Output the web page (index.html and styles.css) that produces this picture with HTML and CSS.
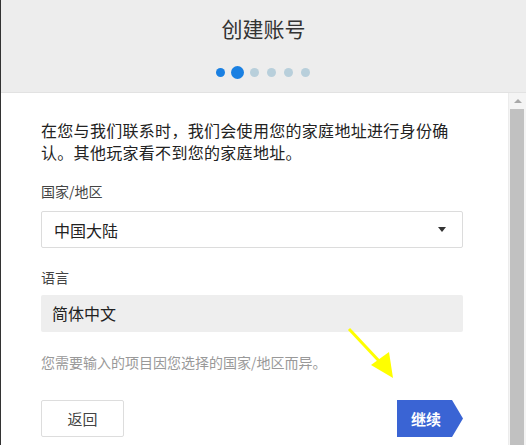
FILE: index.html
```html
<!DOCTYPE html>
<html lang="zh-CN">
<head>
	<meta charset="UTF-8">
	<title>创建账号</title>
	<link rel="stylesheet" href="styles.css">
</head>
<body>
	<div class="window">
		<div class="header">
			<h1 class="title">创建账号</h1>
			<ul class="steps">
				<li><span class="dot done"></span></li>
				<li><span class="dot cur"></span></li>
				<li><span class="dot"></span></li>
				<li><span class="dot"></span></li>
				<li><span class="dot"></span></li>
				<li><span class="dot"></span></li>
			</ul>
		</div>
		<div class="body">
			<div class="content">
				<p class="intro">在您与我们联系时，我们会使用您的家庭地址进行身份确认。其他玩家看不到您的家庭地址。</p>

				<div class="label">国家/地区</div>
				<div class="select">
					<span>中国大陆</span>
					<span class="caret"></span>
				</div>

				<div class="label lang">语言</div>
				<div class="field">简体中文</div>

				<p class="hint">您需要输入的项目因您选择的国家/地区而异。</p>

				<div class="actions">
					<a class="btn back">返回</a>
					<a class="btn next">继续</a>
				</div>
			</div>
			<div class="scrollbar">
				<div class="arrow-up"></div>
				<div class="thumb"></div>
			</div>
		</div>

		<!-- 黄色箭头标注 -->
		<svg class="pointer" width="526" height="445" viewBox="0 0 526 445">
			<line x1="349" y1="329" x2="380" y2="362" stroke="#ffff00" stroke-width="3"/>
			<polygon points="371,365 389,352 393,378" fill="#ffff00"/>
		</svg>
	</div>
</body>
</html>
```

FILE: styles.css
```css
*{
	margin: 0;
	padding: 0;
	box-sizing: border-box;
}
body{
	width: 526px;
	height: 445px;
	overflow: hidden;
	font-family: "Noto Sans CJK SC", "Noto Sans", sans-serif;
	color: #222;
	background: #fff;
}
.window{
	position: relative;
	width: 526px;
	height: 445px;
	border-left: 1px solid #333;
	display: flex;
	flex-direction: column;
}
.header{
	height: 93px;
	background-color: #ededed;
	border-bottom: 1px solid #e2e2e2;
	text-align: center;
}
.title{
	font-size: 21px;
	font-weight: normal;
	color: #333;
	line-height: 28px;
	padding-top: 14px;
}
.steps{
	list-style: none;
	display: flex;
	justify-content: center;
	margin-top: 23px;
	padding-right: 2px;
}
.steps li{
	width: 17px;
	height: 14px;
	display: flex;
	align-items: center;
	justify-content: center;
}
.dot{
	width: 9px;
	height: 9px;
	border-radius: 50%;
	background-color: #b8cfdb;
}
.dot.done{
	background-color: #1a80e2;
}
.dot.cur{
	width: 13px;
	height: 13px;
	background-color: #1a80e2;
}
.body{
	flex: 1;
	display: flex;
}
.content{
	flex: 1;
	padding: 26px 0 0 40px;
	border-right: 1px solid #ececec;
}
.intro{
	width: 410px;
	font-size: 16px;
	line-height: 22px;
	letter-spacing: 0.3px;
	color: #222;
}
.label{
	font-size: 14px;
	line-height: 20px;
	color: #444;
	margin-top: 18px;
	margin-bottom: 10px;
}
.label.lang{
	margin-top: 19px;
	margin-bottom: 8px;
}
.select{
	width: 422px;
	height: 37px;
	border: 1px solid #dcdcdc;
	border-radius: 2px;
	display: flex;
	align-items: center;
	justify-content: space-between;
	padding: 0 16px 0 12px;
	font-size: 16px;
}
.caret{
	width: 0;
	height: 0;
	border-left: 4px solid transparent;
	border-right: 4px solid transparent;
	border-top: 5px solid #333;
}
.field{
	width: 422px;
	height: 37px;
	background-color: #eeeeee;
	border-radius: 2px;
	padding-left: 11px;
	font-size: 16px;
	line-height: 37px;
}
.hint{
	margin-top: 20px;
	font-size: 14px;
	line-height: 20px;
	color: #999;
}
.actions{
	width: 422px;
	margin-top: 28px;
	display: flex;
	justify-content: space-between;
}
.btn{
	height: 37px;
	font-size: 15px;
	line-height: 37px;
	text-align: center;
	cursor: pointer;
}
.back{
	width: 83px;
	border: 1px solid #ddd;
	border-radius: 2px;
	line-height: 35px;
	color: #444;
}
.next{
	width: 66px;
	padding-right: 8px;
	background-color: #3a64d4;
	color: #fff;
	font-weight: bold;
	clip-path: polygon(0 0, 55px 0, 100% 50%, 55px 100%, 0 100%);
}
.scrollbar{
	width: 17px;
	background-color: #f4f4f4;
	display: flex;
	flex-direction: column;
	align-items: flex-start;
}
.arrow-up{
	width: 17px;
	height: 16px;
	display: flex;
	justify-content: center;
	align-items: center;
}
.arrow-up::before{
	content: "";
	border-left: 4px solid transparent;
	border-right: 4px solid transparent;
	border-bottom: 4px solid #a8a8a8;
}
.thumb{
	flex: 1;
	width: 14px;
	margin-left: 1px;
	background-color: #c1c1c1;
}
.pointer{
	position: absolute;
	top: 0;
	left: -1px;
	pointer-events: none;
}
```
